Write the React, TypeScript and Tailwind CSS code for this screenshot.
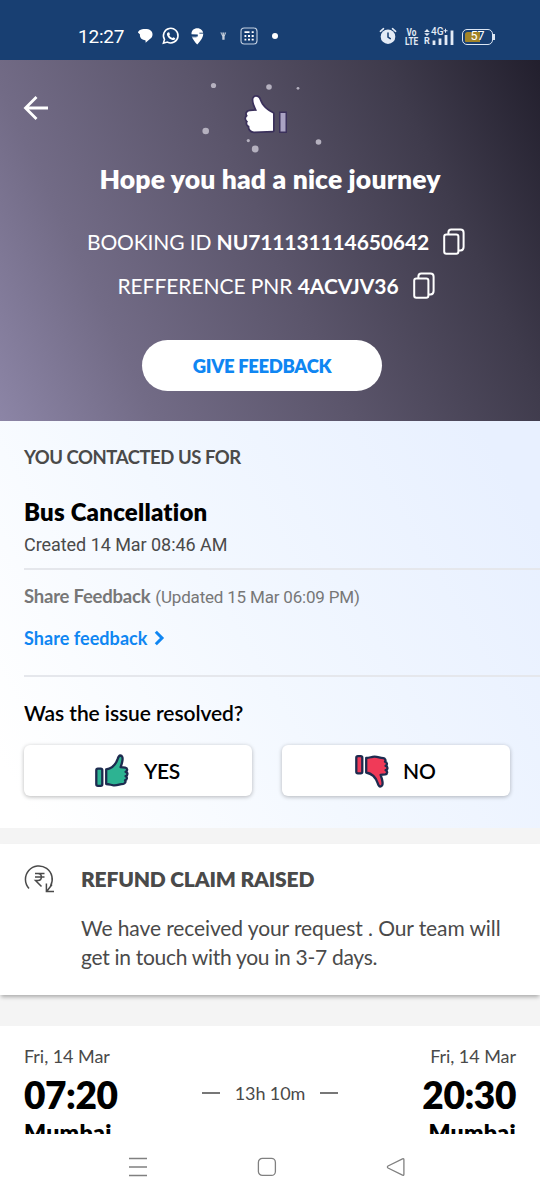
import React from 'react';

type ThumbProps = {
  fill: string;
  className?: string;
};

const ThumbIcon: React.FC<ThumbProps> = ({ fill, className }) => (
  <svg
    viewBox="0 0 36 36"
    className={className}
    fill={fill}
    stroke="#1d2b4f"
    strokeWidth="2.3"
    strokeLinejoin="round"
  >
    <rect x="2.3" y="15.6" width="6" height="17.2" rx="1.6" />
    <path d="M12.2 16.5C18.5 15.3 21.8 11.4 23.6 6.2C24.2 4.2 24.6 2.6 26.3 2.5C28.3 2.5 28.8 4.6 28.5 7C28.2 9.8 27.4 12 26.6 14.2L31.2 14.6C33.7 15 33.8 18 31.6 18.8C34.2 19.4 34 22.7 31.6 23.2C33.6 24 33.2 27 31 27.4C32.2 28.6 31 30.6 29.3 30.8C24.8 31.2 23.3 33 18.6 32.2C16 31.6 14.5 31 12.2 31Z" />
  </svg>
);

const CopyIcon: React.FC = () => (
  <svg
    width="22"
    height="28"
    viewBox="0 0 22 28"
    fill="none"
    stroke="#ffffff"
    strokeWidth="2"
    strokeLinejoin="round"
    className="shrink-0"
  >
    <rect x="1.2" y="6.4" width="14.2" height="19.4" rx="2.2" />
    <path d="M5.4 6V4.4C5.4 2.6 6.4 1.6 8.2 1.6H17.5C19.5 1.6 20.6 2.7 20.6 4.7V19C20.6 21.2 19.4 22.4 17.4 22.6L15.8 22.6" />
  </svg>
);

const StatusBar: React.FC = () => (
  <div className="flex h-[60px] items-center bg-[#183f72] pt-[13px] pl-[78px] text-white">
    <span className="w-[60px] font-['Roboto',sans-serif] text-[19px] leading-none tracking-[-0.2px]">12:27</span>
    <svg width="150" height="20" viewBox="138 26 150 20" className="-mt-px" fill="#fff">
      {/* chat bubble */}
      <path d="M139.5 30.3C142.5 28.7 148.5 28.7 150.6 30.5C153.4 32.7 153 36.8 150.2 38.8L145.6 42.8V40.4C141.6 40.2 139.4 37.4 140 34.4L137.8 32.2Z" />
      {/* whatsapp */}
      <path
        d="M163.4 43.2L164.5 39.4A7.3 7.3 0 1 1 167.4 42.1Z"
        fill="none"
        stroke="#fff"
        strokeWidth="1.6"
      />
      <path d="M167.8 32.4L169.1 32.2L170 34.3L169.3 35.3C170 36.7 171 37.6 172.4 38.1L173.4 37.2L175.3 38.2C175 40 173.3 40.3 171.8 39.8C169.4 39 167.7 37.1 167 35C166.8 33.8 167.1 32.8 167.8 32.4Z" />
      {/* map pin */}
      <path d="M191.5 34.2C191.3 30.6 193.8 28.3 197.3 28.3C200.8 28.3 203.4 30.8 203.2 34.3C203 38 199.8 42 197.2 44.5C195 42.3 192.6 39 191.7 36.2L197.8 36.5V34.6Z" />
      <path d="M199.4 33.2H203.4M191.6 36.8H196.6" fill="none" stroke="#183f72" strokeWidth=".9" />
      {/* small glyph */}
      <path d="M220.3 32.5H226.2L224.6 36.5V39.7H222.3V36.5Z" opacity=".75" />
      <path d="M222.2 32V34.6M224.4 32V34.6" stroke="#183f72" strokeWidth=".6" />
      {/* calculator */}
      <rect x="241" y="28" width="16" height="16" rx="3.2" fill="none" stroke="#c4d1e2" strokeWidth="1.1" />
      <path
        d="M244.5 32.2H249.5M251.7 32.2H253.7M248 36H250M251.7 36H253.7M244.5 36H246.3M244.5 39.7H246.3M248 39.7H250M251.7 39.7H253.7"
        stroke="#fff"
        strokeWidth="1.8"
      />
      <circle cx="275" cy="36" r="3" />
    </svg>

    <svg width="18" height="18" viewBox="0 0 18 18" className="-mt-px ml-[91px]" fill="none" stroke="#e3ebf6" strokeLinecap="round">
      <circle cx="9" cy="9.7" r="7.3" fill="#e3ebf6" stroke="none" />
      <path d="M1.4 4.3L4.5 1.7M13.5 1.7L16.6 4.3" strokeWidth="1.6" />
      <path d="M9 6V10L11.3 11.6" stroke="#183f72" strokeWidth="1.5" />
    </svg>
    <div className="ml-[8px] flex w-[13px] origin-center scale-x-[0.82] flex-col items-center font-['Roboto',sans-serif] text-[10px] leading-[9px] font-bold text-[#e3ebf6]">
      <span>Vo</span>
      <span>LTE</span>
    </div>
    <div className="relative ml-[6px] h-[18px] w-[32px] font-['Roboto',sans-serif] leading-none font-medium text-[#e3ebf6]">
      <svg width="32" height="18" viewBox="0 0 32 18" fill="currentColor">
        <path d="M3 1L5.8 4H.2ZM3 8L5.8 5.2H.2Z" />
        <path d="M8.6 12.5H11.4V17H8.6ZM14.6 10.5H17.4V17H14.6ZM20.6 7H23.4V17H20.6ZM26.6 2.5H29.4V17H26.6Z" />
        <path d="M19.5 2.2H21V.7H22V2.2H23.5V3.2H22V4.7H21V3.2H19.5Z" />
      </svg>
      <span className="absolute top-[9px] left-0 text-[9px] font-bold">R</span>
      <span className="absolute -top-px left-[7px] text-[10px]">4G</span>
    </div>
    <div className="ml-[6px] flex items-center">
      <div className="flex h-[16px] w-[31px] items-center justify-center rounded-[5px] border-[1.5px] border-[#dce6f3] bg-linear-to-r from-[#a18428] from-56% to-[#183f72] to-56% bg-clip-content p-[1.5px] font-['Roboto',sans-serif] text-[12.5px] leading-none">
        57
      </div>
      <div className="h-[6px] w-[1.5px] bg-[#dce6f3]" />
    </div>
  </div>
);

const Hero: React.FC = () => (
  <div className="flex h-[361px] flex-col items-center bg-[linear-gradient(65deg,#8c85a6_0%,#726b86_22%,#5b556b_50%,#3f3b4c_78%,#221f2d_100%)] font-['Lato',sans-serif] text-white">
    <div className="flex h-[104px] w-full items-start">
      <svg width="26" height="26" viewBox="0 0 26 26" className="mt-[35px] ml-[23px]" fill="none" stroke="#fff" strokeWidth="2.8">
        <path d="M25 13H3M13.5 2L2.5 13L13.5 24" />
      </svg>
      <svg width="132" height="84" viewBox="194 76 132 84" className="mt-4 ml-[145px]">
        <g fill="#b5b1bf">
          <circle cx="213.5" cy="85.5" r="2.6" />
          <circle cx="269" cy="87" r="2.8" />
          <circle cx="298" cy="88.3" r="1.4" />
          <circle cx="205.7" cy="131" r="3.3" />
          <circle cx="248.3" cy="140.6" r="1.6" />
          <circle cx="255.2" cy="149" r="3.4" />
          <circle cx="318.5" cy="142" r="2.8" />
        </g>
        <path
          d="M273 113.5C266.8 110.5 262 106.5 259.7 100C258.5 96 253.6 95.8 253.4 99.5C253.3 103.5 255.5 107 257 110.8L250 111.2C246.8 111.5 246 114 247.8 116C245.3 117.5 245.8 120 248 121.2C246.5 123.2 247.5 125.2 249.5 126C248.8 129 251 131.4 254 131.6L273 130.7Z"
          fill="#fff"
          stroke="#3b315b"
          strokeWidth="3.5"
          strokeLinejoin="round"
          paintOrder="stroke"
        />
        <rect x="280.5" y="113" width="5" height="18.5" fill="#aaa3c4" stroke="#3b315b" strokeWidth="3" paintOrder="stroke" />
      </svg>
    </div>
    <h1 className="h-[32px] text-[26.5px] leading-[31px] font-extrabold tracking-[0.15px]">Hope you had a nice journey</h1>
    <div className="mt-[30px] ml-[12px] flex h-[32px] items-center text-[21px] leading-[32px] tracking-[-0.12px]">
      <span className="whitespace-pre">BOOKING ID </span>
      <span className="mr-[14px] font-bold">NU711131114650642</span>
      <CopyIcon />
    </div>
    <div className="mt-[12px] ml-[12px] flex h-[32px] items-center text-[21px] leading-[32px] tracking-[-0.06px]">
      <span className="whitespace-pre">REFFERENCE PNR </span>
      <span className="mr-[14px] font-bold">4ACVJV36</span>
      <CopyIcon />
    </div>
    <button className="mt-[38px] mr-[16px] h-[51px] w-[240px] rounded-full bg-white pt-[2px] text-[18.5px] font-extrabold tracking-[-0.35px] text-[#0f86f2]">
      GIVE FEEDBACK
    </button>
  </div>
);

const ContactSection: React.FC = () => (
  <div className="h-[407px] bg-[linear-gradient(60deg,#ffffff_5%,#f3f8ff_45%,#e8f0ff_92%)] pl-6 font-['Lato',sans-serif]">
    <h2 className="pt-[24px] text-[18.5px] leading-[24px] font-bold tracking-[-0.46px] text-[#4a4a4a]">YOU CONTACTED US FOR</h2>
    <h3 className="mt-[27px] text-[24px] leading-[32px] font-extrabold tracking-[0.22px] text-black">Bus Cancellation</h3>
    <p className="mt-[5px] font-['Roboto',sans-serif] text-[18px] leading-[24px] tracking-[-0.05px] text-[#4a4a4a]">Created 14 Mar 08:46 AM</p>
    <div className="mt-[11px] h-[2px] bg-[#e5e7ec]" />
    <p className="mt-[14px] text-[18.5px] leading-[24px] text-[#777777]">
      <span className="mr-[5px] font-bold tracking-[-0.22px]">Share Feedback</span>
      <span className="font-['Roboto',sans-serif] text-[17px] tracking-[-0.19px]">(Updated 15 Mar 06:09 PM)</span>
    </p>
    <a className="mt-[17px] flex items-center text-[18px] leading-[24px] font-bold tracking-[0.05px] text-[#0f86f2]">
      Share feedback
      <svg width="11" height="16" viewBox="0 0 11 16" className="ml-[7px]" fill="none" stroke="#0f86f2" strokeWidth="3">
        <path d="M1.8 1.8L8 8L1.8 14.2" />
      </svg>
    </a>
    <div className="mt-[25px] h-[2px] bg-[#e5e7ec]" />
    <p className="mt-[23px] text-[21px] leading-[26px] font-semibold tracking-[-0.08px] text-black">Was the issue resolved?</p>
    <div className="mt-[19px] flex gap-[30px]">
      <button className="flex h-[51px] w-[228px] items-center rounded-[6px] bg-white pl-[70px] text-[21px] font-semibold text-black shadow-[0_1px_4px_rgba(0,0,0,0.28)]">
        <ThumbIcon fill="#2db392" className="h-[36px] w-[36px]" />
        <span className="ml-[14px] tracking-[-0.3px]">YES</span>
      </button>
      <button className="flex h-[51px] w-[228px] items-center rounded-[6px] bg-white pl-[72px] text-[21px] font-semibold text-black shadow-[0_1px_4px_rgba(0,0,0,0.28)]">
        <ThumbIcon fill="#f03a58" className="h-[36px] w-[36px] -scale-y-100" />
        <span className="ml-[13px]">NO</span>
      </button>
    </div>
  </div>
);

const RefundCard: React.FC = () => (
  <div className="mt-4 flex h-[151px] bg-white pl-6 font-['Lato',sans-serif] text-[#4a4a4a] shadow-[0_3px_4px_-1px_rgba(0,0,0,0.3)]">
    <svg width="32" height="32" viewBox="0 0 32 32" className="mt-[20px] shrink-0" fill="none" stroke="#4a4a4a" strokeWidth="1.5">
      <path d="M5 24.5A13.4 13.4 0 1 1 26.5 22" />
      <path d="M22.4 19.5V27.6H30M22.8 27.2L28 20.5" />
      <path d="M11 9.5H20.5M11 13H20.5M11 9.5H14C18.5 9.5 18.5 16.5 14 16.5H11.5L17.5 22.5" />
    </svg>
    <div className="ml-[25px] pt-[22px]">
      <h2 className="text-[21px] leading-[26px] font-extrabold tracking-[-0.19px]">REFUND CLAIM RAISED</h2>
      <p className="mt-[21px] text-[21px] leading-[29px] tracking-[-0.1px] whitespace-nowrap">
        We have received your request . Our team will
        <br />
        <span className="tracking-[-0.29px]">get in touch with you in 3-7 days.</span>
      </p>
    </div>
  </div>
);

type StopProps = {
  date: string;
  time: string;
  city: string;
};

const TripStop: React.FC<StopProps> = ({ date, time, city }) => (
  <div>
    <p className="text-[18px] leading-[24px] tracking-[-0.05px] text-[#4a4a4a]">{date}</p>
    <p className="mt-[5px] text-[37px] leading-[44px] font-extrabold tracking-[-0.4px] text-black">{time}</p>
    <p className="mt-[2px] text-[23px] leading-[26px] font-extrabold tracking-[0.3px] text-black">{city}</p>
  </div>
);

const TripSection: React.FC = () => (
  <div className="mt-[31px] flex h-[108px] justify-between overflow-hidden bg-white px-6 pt-[18px] font-['Lato',sans-serif]">
    <TripStop date="Fri, 14 Mar" time="07:20" city="Mumbai" />
    <div className="mt-[37px] flex h-[24px] items-center gap-[15px] text-[18px] tracking-[-0.1px] text-[#4a4a4a]">
      <span className="h-[1.5px] w-[18px] bg-[#777777]" />
      <span>13h 10m</span>
      <span className="h-[1.5px] w-[18px] bg-[#777777]" />
    </div>
    <div className="text-right">
      <TripStop date="Fri, 14 Mar" time="20:30" city="Mumbai" />
    </div>
  </div>
);

const NavBar: React.FC = () => (
  <div className="flex h-[66px] items-start bg-white pt-[23px] pl-[128px]">
    <svg width="20" height="20" viewBox="0 0 20 20" fill="none" stroke="#808080" strokeWidth="1.3">
      <path d="M1 1.5H19M1 10H19M1 18.5H19" />
    </svg>
    <svg width="20" height="20" viewBox="0 0 20 20" className="ml-[109px]" fill="none" stroke="#808080" strokeWidth="1.3">
      <rect x="1.4" y="1.4" width="17" height="17" rx="4" />
    </svg>
    <svg width="20" height="20" viewBox="0 0 20 20" className="ml-[109px]" fill="none" stroke="#808080" strokeWidth="1.3" strokeLinejoin="round">
      <path d="M16.5 1.8L2 9Q.8 10 2 11L16.5 18.2Q17.9 18.6 17.9 17.2V2.8Q17.9 1.4 16.5 1.8Z" />
    </svg>
  </div>
);

export default function App() {
  return (
    <div className="h-[1200px] w-[540px] overflow-hidden bg-[#f4f4f4]">
      <StatusBar />
      <Hero />
      <ContactSection />
      <RefundCard />
      <TripSection />
      <NavBar />
    </div>
  );
}
